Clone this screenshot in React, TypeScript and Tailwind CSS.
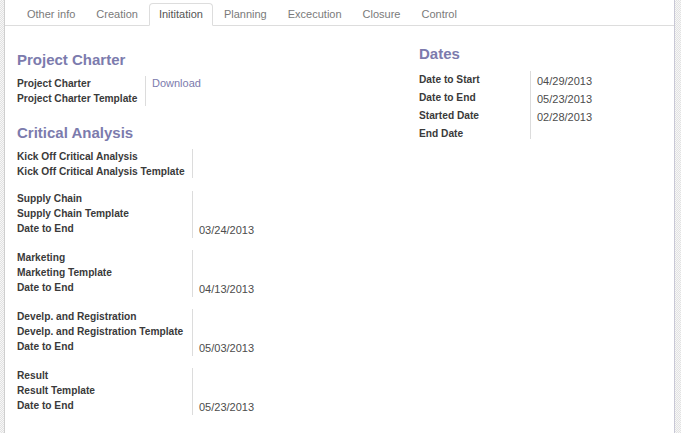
import React from "react";

const tabs = ["Other info", "Creation", "Inititation", "Planning", "Excecution", "Closure", "Control"];

const groups = [
  { name: "Supply Chain", date: "03/24/2013" },
  { name: "Marketing", date: "04/13/2013" },
  { name: "Develp. and Registration", date: "05/03/2013" },
  { name: "Result", date: "05/23/2013" },
];

const dates = [
  { label: "Date to Start", value: "04/29/2013" },
  { label: "Date to End", value: "05/23/2013" },
  { label: "Started Date", value: "02/28/2013" },
  { label: "End Date", value: "" },
];

function Heading({ children }: { children: React.ReactNode }) {
  return <h2 className="text-[15px] leading-[20px] font-bold text-[#7c7bad]">{children}</h2>;
}

function Label({ children }: { children: React.ReactNode }) {
  return <div className="h-[15px] text-[10.2px] leading-[15px] font-bold text-[#3a3a3a] whitespace-nowrap">{children}</div>;
}

export default function App() {
  return (
    <div className="flex h-screen w-full bg-white font-['Liberation_Sans',Arial,sans-serif]">
      <div className="w-[5px] shrink-0 border-r border-[#cfcfcf] bg-[repeating-conic-gradient(#e2e2e2_0_25%,#f7f7f7_0_50%)] bg-[length:2px_2px]" />

      <div className="flex-1 min-w-0">
        <div className="flex border-b border-[#dddddd] pt-[3px] pl-[12px]">
          {tabs.map((t) => {
            const active = t === "Inititation";
            return (
              <div
                key={t}
                className={
                  active
                    ? "-mb-px mr-px rounded-t-[4px] border border-[#dddddd] border-b-white bg-white px-[9px] text-[11px] leading-[21px] text-[#555]"
                    : "-mb-px mr-px rounded-t-[4px] border border-transparent px-[9px] text-[11px] leading-[21px] text-[#7a7a7a]"
                }
              >
                {t}
              </div>
            );
          })}
        </div>

        <div className="grid grid-cols-[402px_1fr] pl-[12px]">
          {/* left column */}
          <div className="pt-[24px]">
            <Heading>Project Charter</Heading>
            <div className="mt-[6px] flex">
              <div className="w-[128px]">
                <Label>Project Charter</Label>
                <Label>Project Charter Template</Label>
              </div>
              <div className="h-[30px] border-l border-[#dcdcdc] pl-[6px]">
                <div className="text-[11px] leading-[15px] text-[#7c7bad]">Download</div>
              </div>
            </div>

            <div className="mt-[17px]">
              <Heading>Critical Analysis</Heading>
            </div>

            <div className="mt-[6px] flex flex-col gap-[12px]">
              <div className="flex">
                <div className="w-[175px]">
                  <Label>Kick Off Critical Analysis</Label>
                  <Label>Kick Off Critical Analysis Template</Label>
                </div>
                <div className="h-[29px] border-l border-[#dcdcdc]" />
              </div>

              {groups.map((g) => (
                <div key={g.name} className="flex">
                  <div className="w-[175px]">
                    <Label>{g.name}</Label>
                    <Label>{g.name} Template</Label>
                    <Label>Date to End</Label>
                  </div>
                  <div className="flex h-[47px] items-end border-l border-[#dcdcdc] pl-[6px]">
                    <div className="text-[11px] leading-[15px] text-[#4c4c4c]">{g.date}</div>
                  </div>
                </div>
              ))}
            </div>
          </div>

          {/* right column */}
          <div className="pt-[18px]">
            <Heading>Dates</Heading>
            <div className="mt-[7px] flex">
              <div className="w-[111px] pt-px">
                {dates.map((d) => (
                  <div key={d.label} className="h-[18px] text-[10.2px] leading-[16px] font-bold text-[#3a3a3a]">
                    {d.label}
                  </div>
                ))}
              </div>
              <div className="h-[68px] border-l border-[#dcdcdc] pl-[6px] pt-[1px]">
                {dates.map((d) => (
                  <div key={d.label} className="h-[18px] text-[11px] leading-[18px] text-[#4c4c4c]">
                    {d.value}
                  </div>
                ))}
              </div>
            </div>
          </div>
        </div>
      </div>

      <div className="w-[7px] shrink-0 border-l border-[#c8c8d6] bg-[repeating-conic-gradient(#e2e2e2_0_25%,#f7f7f7_0_50%)] bg-[length:2px_2px]" />
    </div>
  );
}
